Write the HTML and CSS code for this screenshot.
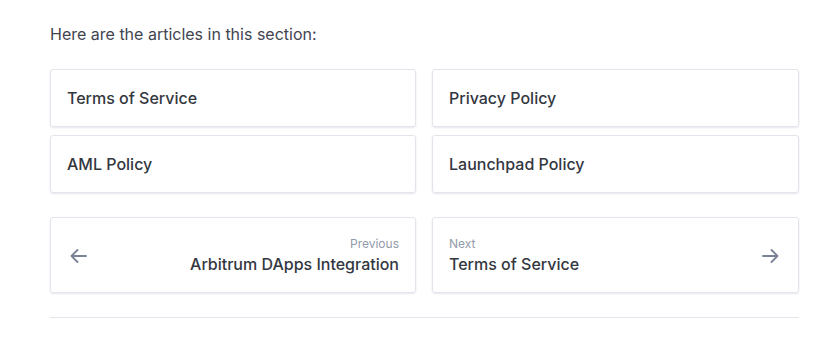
FILE: index.html
```html
<!DOCTYPE html>
<html lang="en">

<head>
    <meta charset="UTF-8">
    <meta name="viewport" content="width=device-width, initial-scale=1.0">
    <title>Policies</title>
    <link rel="stylesheet" href="styles.css">
</head>

<body>
    <div class="page">
        <p class="intro">Here are the articles in this section:</p>

        <div class="articles">
            <a class="card" href="#">Terms of Service</a>
            <a class="card" href="#">Privacy Policy</a>
            <a class="card" href="#">AML Policy</a>
            <a class="card" href="#">Launchpad Policy</a>
        </div>

        <div class="pager">
            <a class="nav-card prev" href="#">
                <svg class="arrow" width="17" height="16" viewBox="0 0 17 16" fill="none" stroke="currentColor" stroke-width="1.8" stroke-linecap="round" stroke-linejoin="round">
                    <path d="M16 8H1.5M7.5 2L1.5 8l6 6"/>
                </svg>
                <div class="nav-text">
                    <span class="nav-label">Previous</span>
                    <span class="nav-title">Arbitrum DApps Integration</span>
                </div>
            </a>
            <a class="nav-card next" href="#">
                <div class="nav-text">
                    <span class="nav-label">Next</span>
                    <span class="nav-title">Terms of Service</span>
                </div>
                <svg class="arrow" width="17" height="16" viewBox="0 0 17 16" fill="none" stroke="currentColor" stroke-width="1.8" stroke-linecap="round" stroke-linejoin="round">
                    <path d="M1 8h14.5M9.5 2l6 6-6 6"/>
                </svg>
            </a>
        </div>

        <hr class="divider">
    </div>
</body>

</html>
```

FILE: styles.css
```css
body {
    margin: 0;
    font-family: Inter, "Noto Sans", sans-serif;
    background-color: #FFF;
    color: #3b3f4a;
}

.page {
    width: 749px;
    margin-left: 50px;
    padding-top: 22px;
}

.intro {
    margin: 0 0 23px;
    font-size: 16px;
    line-height: 24px;
    color: #41454f;
}

.articles {
    display: grid;
    grid-template-columns: 366px 1fr;
    column-gap: 16px;
    row-gap: 8px;
}

.card {
    display: block;
    padding: 16px;
    border: 1px solid #e3e4ec;
    border-radius: 3px;
    box-shadow: 0 1px 2px rgba(116, 120, 160, 0.18);
    font-size: 16px;
    font-weight: 500;
    line-height: 24px;
    color: #33373f;
    text-decoration: none;
}

.pager {
    display: grid;
    grid-template-columns: 366px 1fr;
    column-gap: 16px;
    margin-top: 24px;
}

.nav-card {
    display: flex;
    align-items: center;
    justify-content: space-between;
    padding: 18px 16px 16px 19px;
    border: 1px solid #e3e4ec;
    border-radius: 3px;
    box-shadow: 0 1px 2px rgba(116, 120, 160, 0.18);
    text-decoration: none;
}

.nav-card.next {
    padding: 18px 19px 16px 16px;
}

.arrow {
    color: #7a8296;
    flex-shrink: 0;
}

.nav-text {
    display: flex;
    flex-direction: column;
}

.prev .nav-text {
    align-items: flex-end;
}

.nav-label {
    font-size: 12px;
    line-height: 16px;
    color: #939aaa;
}

.nav-title {
    font-size: 16px;
    font-weight: 500;
    line-height: 24px;
    color: #33373f;
}

.divider {
    margin: 24px 0 0;
    border: 0;
    border-top: 1px solid #e3e4ec;
}
```
